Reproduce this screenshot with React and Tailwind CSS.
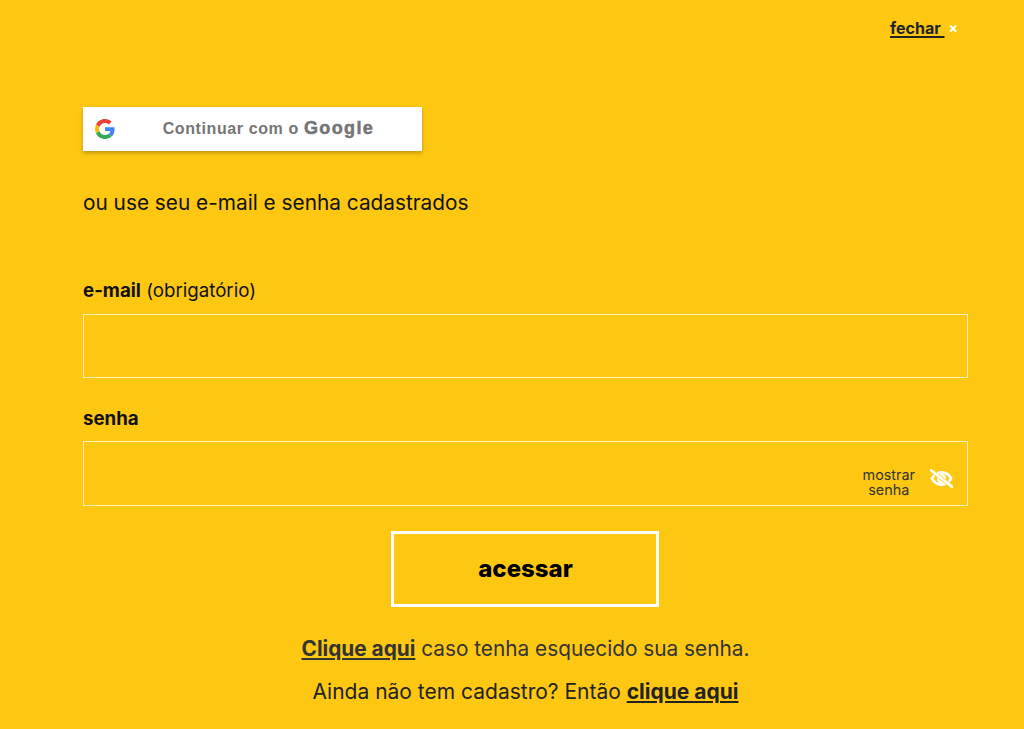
import { FaRegEyeSlash } from "react-icons/fa";

function GoogleIcon() {
  return (
    <svg viewBox="0 0 48 48" className="w-[20px] h-[20px]">
      <path fill="#EA4335" d="M24 9.5c3.5 0 6.7 1.2 9.2 3.6l6.9-6.9C35.9 2.4 30.5 0 24 0 14.6 0 6.5 5.4 2.6 13.2l8 6.2C12.5 13.7 17.8 9.5 24 9.5z" />
      <path fill="#4285F4" d="M46.98 24.55c0-1.57-.15-3.09-.38-4.55H24v9.02h12.94c-.58 2.96-2.26 5.48-4.78 7.18l7.73 6c4.51-4.18 7.09-10.36 7.09-17.65z" />
      <path fill="#FBBC05" d="M10.53 28.59c-.48-1.45-.76-2.99-.76-4.59s.27-3.14.76-4.59l-7.98-6.19C.92 16.46 0 20.12 0 24c0 3.88.92 7.54 2.56 10.78l7.97-6.19z" />
      <path fill="#34A853" d="M24 48c6.48 0 11.93-2.13 15.89-5.81l-7.73-6c-2.15 1.45-4.92 2.3-8.16 2.3-6.26 0-11.57-4.22-13.47-9.91l-7.98 6.19C6.51 42.62 14.62 48 24 48z" />
    </svg>
  );
}

export default function App() {
  return (
    <div className="h-[729px] overflow-hidden bg-[#fec812] text-[#111] font-['Inter',sans-serif]">
      <div className="flex justify-end items-center pt-[16px] pr-[66px] h-[40px]">
        <a className="text-[16px] font-bold text-[#222] underline underline-offset-2 decoration-2">fechar&nbsp;</a>
        <span className="ml-[4px] text-[14px] font-bold leading-none text-white">×</span>
      </div>

      <div className="pl-[83px] pr-[56px] pt-[67px]">
        <button className="w-[339px] h-[44px] bg-white shadow-[0_2px_4px_rgba(0,0,0,0.25)] flex items-center pl-[12px] pb-[1px]">
          <GoogleIcon />
          <span className="flex-1 text-center text-[16px] font-bold text-[#757575] font-['Liberation_Sans',sans-serif] tracking-[0.6px]">
            Continuar com o <span className="text-[18px] tracking-[1.4px] [-webkit-text-stroke:0.5px_#757575]">Google</span>
          </span>
        </button>

        <p className="mt-[38px] text-[20.8px] leading-[28px]">ou use seu e-mail e senha cadastrados</p>

        <label className="block mt-[61px] text-[18.7px] leading-[26px]">
          <b className="font-bold">e-mail</b> (obrigatório)
        </label>
        <div className="mt-[10px] h-[64px] border border-[#fff2bd]"></div>

        <label className="block mt-[28px] text-[18.7px] leading-[26px] font-bold">senha</label>
        <div className="mt-[9px] h-[65px] border border-[#fff2bd] flex items-end justify-end pr-[14px] pb-[8px]">
          <span className="text-[14.4px] leading-[15px] text-center text-[#333]">
            mostrar
            <br />
            senha
          </span>
          <FaRegEyeSlash className="ml-[15px] mb-[7px] text-white text-[23px] [stroke-width:30]" />
        </div>

        <div className="flex justify-center mt-[25px] pr-[2px]">
          <button className="w-[268px] h-[76px] border-[3px] border-white pl-[2px] text-[24px] font-extrabold text-black">acessar</button>
        </div>

        <p className="mt-[27px] text-center text-[20.8px] leading-[30px] text-[#333]">
          <a className="font-bold underline">Clique aqui</a> caso tenha esquecido sua senha.
        </p>
        <p className="mt-[13px] text-center text-[21px] leading-[30px] text-[#222]">
          Ainda não tem cadastro? Então <a className="font-bold underline">clique aqui</a>
        </p>
      </div>
    </div>
  );
}
